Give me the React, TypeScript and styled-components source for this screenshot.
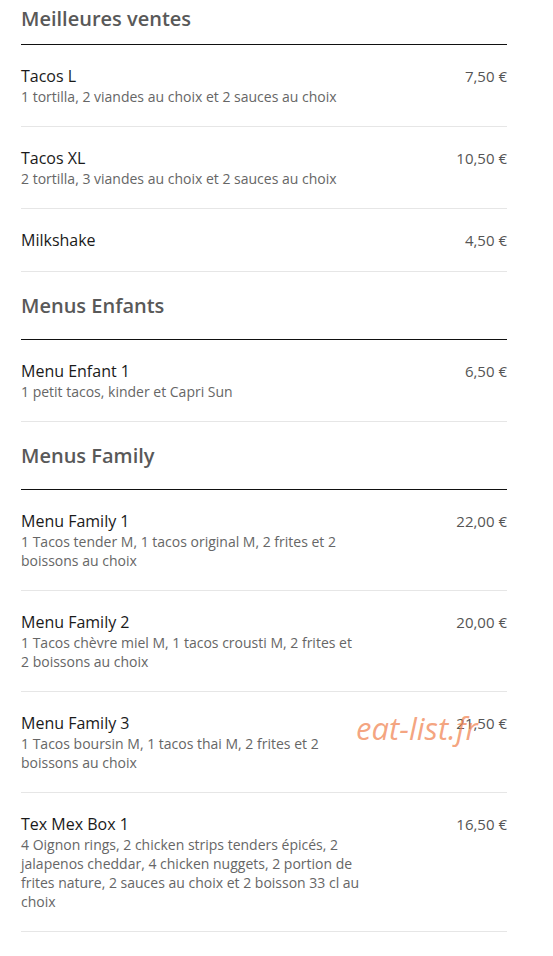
import React from "react";
import styled, { createGlobalStyle } from "styled-components";

const Global = createGlobalStyle`
  html, body { margin: 0; padding: 0; background: #fff; }
  body { font-family: "Open Sans", "Liberation Sans", sans-serif; }
`;

const Page = styled.div`
  position: relative;
  width: 486px;
  padding: 5px 0 0 21px;
`;

const Section = styled.section`
  & + & { margin-top: 20px; }
`;

const SectionTitle = styled.h2<{ $first?: boolean }>`
  margin: 0;
  font-size: 20px;
  line-height: 28px;
  font-weight: 600;
  color: #595959;
  padding-bottom: ${(p) => (p.$first ? 11 : 19)}px;
  border-bottom: 1px solid #111;
`;

const Item = styled.div`
  display: flex;
  justify-content: space-between;
  align-items: flex-start;
  padding: 20px 0 20px;
  border-bottom: 1px solid #e6e6e6;
`;

const Info = styled.div`
  width: 342px;
`;

const Name = styled.div`
  font-size: 16px;
  line-height: 22px;
  color: #1a1a1a;
`;

const Desc = styled.div`
  font-size: 14px;
  line-height: 19px;
  color: #666;
`;

const Price = styled.div`
  font-size: 15px;
  line-height: 22px;
  color: #555;
  white-space: nowrap;
`;

const Watermark = styled.div`
  position: absolute;
  left: 356px;
  top: 708px;
  font-size: 31px;
  line-height: 40px;
  font-style: italic;
  font-weight: 400;
  color: rgba(240, 130, 80, 0.72);
  pointer-events: none;
`;

type Dish = { name: string; desc?: string; price: string };

const sections: { title: string; items: Dish[] }[] = [
  {
    title: "Meilleures ventes",
    items: [
      { name: "Tacos L", desc: "1 tortilla, 2 viandes au choix et 2 sauces au choix", price: "7,50 €" },
      { name: "Tacos XL", desc: "2 tortilla, 3 viandes au choix et 2 sauces au choix", price: "10,50 €" },
      { name: "Milkshake", price: "4,50 €" },
    ],
  },
  {
    title: "Menus Enfants",
    items: [{ name: "Menu Enfant 1", desc: "1 petit tacos, kinder et Capri Sun", price: "6,50 €" }],
  },
  {
    title: "Menus Family",
    items: [
      { name: "Menu Family 1", desc: "1 Tacos tender M, 1 tacos original M, 2 frites et 2 boissons au choix", price: "22,00 €" },
      { name: "Menu Family 2", desc: "1 Tacos chèvre miel M, 1 tacos crousti M, 2 frites et 2 boissons au choix", price: "20,00 €" },
      { name: "Menu Family 3", desc: "1 Tacos boursin M, 1 tacos thai M, 2 frites et 2 boissons au choix", price: "21,50 €" },
      {
        name: "Tex Mex Box 1",
        desc: "4 Oignon rings, 2 chicken strips tenders épicés, 2 jalapenos cheddar, 4 chicken nuggets, 2 portion de frites nature, 2 sauces au choix et 2 boisson 33 cl au choix",
        price: "16,50 €",
      },
    ],
  },
];

export default function App() {
  return (
    <>
      <Global />
      <Page>
        {sections.map((s, i) => (
          <Section key={s.title}>
            <SectionTitle $first={i === 0}>{s.title}</SectionTitle>
            {s.items.map((it) => (
              <Item key={it.name}>
                <Info>
                  <Name>{it.name}</Name>
                  {it.desc && <Desc>{it.desc}</Desc>}
                </Info>
                <Price>{it.price}</Price>
              </Item>
            ))}
          </Section>
        ))}
        <Watermark>eat-list.fr</Watermark>
      </Page>
    </>
  );
}
